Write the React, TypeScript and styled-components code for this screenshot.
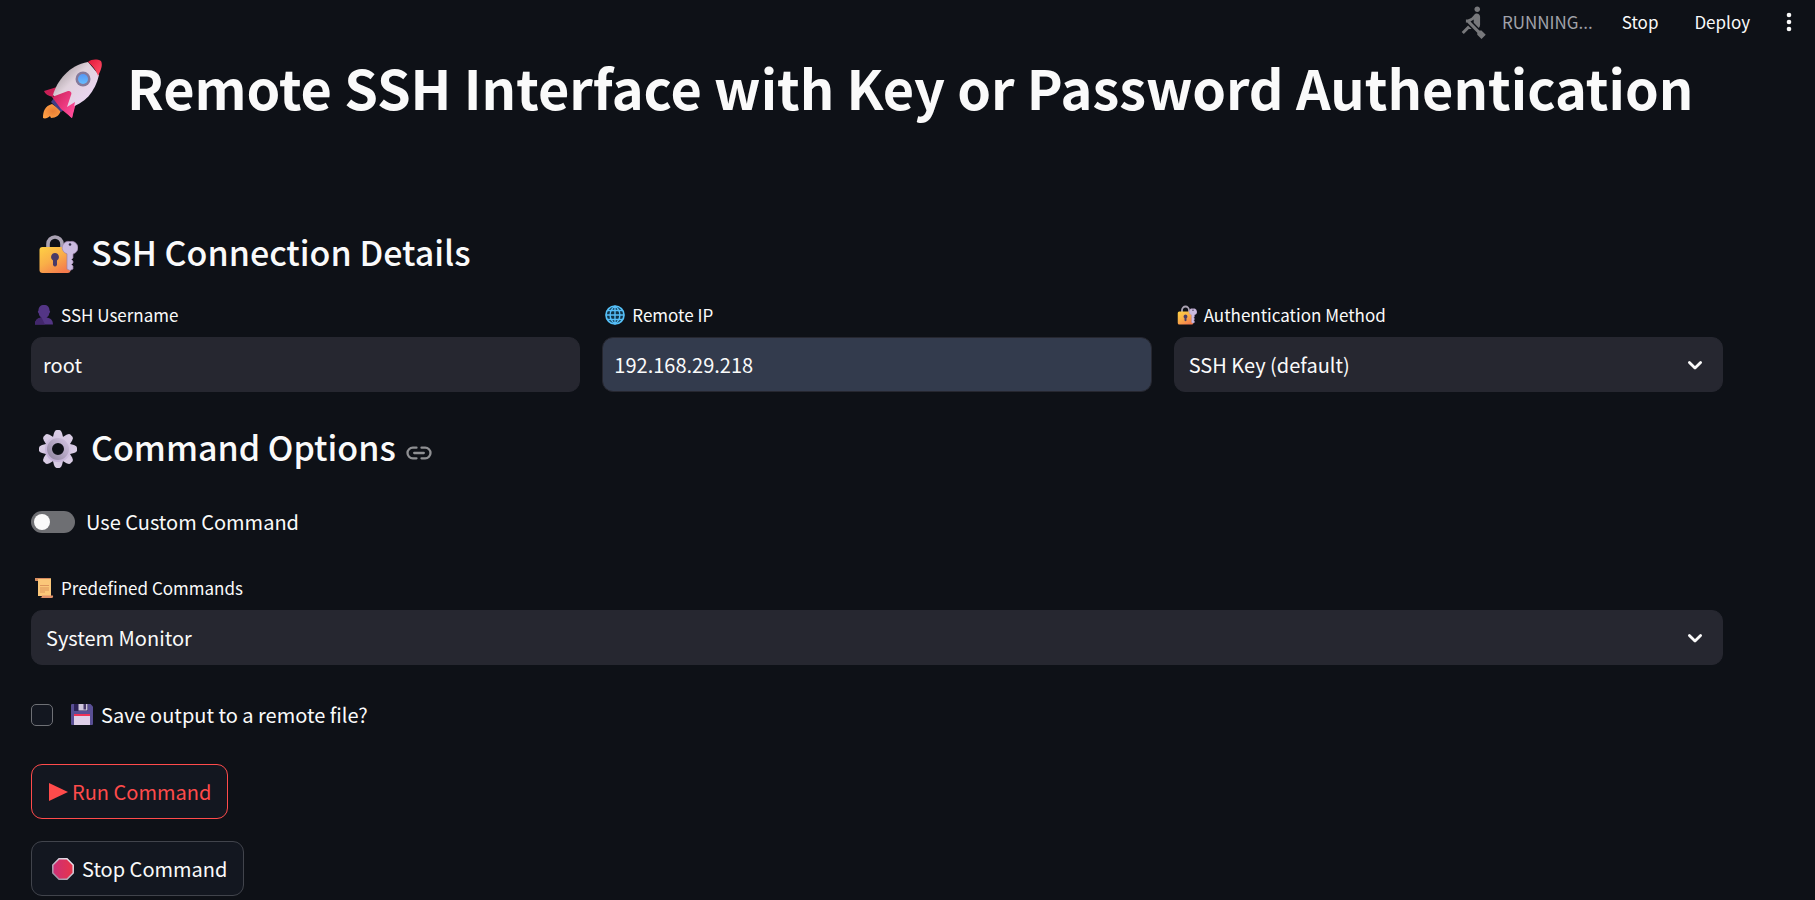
import React, { useState } from "react";
import styled, { createGlobalStyle, css } from "styled-components";

const GlobalStyle = createGlobalStyle`
  *, *::before, *::after { box-sizing: border-box; }
  body {
    margin: 0;
    background: #0e1117;
    color: #fafafa;
    font-family: "Noto Sans CJK SC", "Noto Sans", sans-serif;
    font-size: 20px;
    line-height: 32px;
  }
  button, input, select { font: inherit; color: inherit; }
`;

const Header = styled.header`
  display: flex;
  align-items: center;
  justify-content: flex-end;
  height: 44px;
  padding-right: 10px;
  font-size: 17px;
  line-height: 24px;
`;

const Status = styled.div`
  display: flex;
  align-items: center;
  gap: 12px;
  margin-right: 11px;
  color: #a0a2aa;
`;

const HeaderButton = styled.button`
  border: 0;
  background: none;
  padding: 0 18px;
  cursor: pointer;
`;

const MenuButton = styled(HeaderButton)`
  display: flex;
  padding: 0 5px;
  margin-left: 5px;
`;

const Main = styled.main`
  padding: 7px 92px 4px 31px;
`;

const Title = styled.h1`
  display: flex;
  align-items: center;
  gap: 24px;
  margin: 0 0 101px;
  padding-left: 11px;
  font-size: 54px;
  font-weight: 700;
  line-height: 72px;
  white-space: nowrap;
  & > svg { margin-top: 4px; }
`;

const Heading = styled.h2`
  display: flex;
  align-items: center;
  gap: 13px;
  margin: 0;
  padding-left: 7px;
  font-size: 34px;
  font-weight: 500;
  line-height: 56px;
  & > svg { margin-top: 4px; }
`;

const HeadingLink = styled.a`
  display: flex;
  margin: 11px 0 0 -3px;
`;

const Columns = styled.div`
  display: grid;
  grid-template-columns: repeat(3, minmax(0, 1fr));
  gap: 22px;
  margin: 22px 0 27px;
`;

const Field = styled.div`
  display: flex;
  flex-direction: column;
  gap: 9px;
`;

const Label = styled.label`
  display: flex;
  align-items: center;
  gap: 7px;
  padding-left: 3px;
  font-size: 17px;
  line-height: 26px;
`;

const control = css`
  width: 100%;
  height: 55px;
  border: 1px solid #262730;
  border-radius: 11px;
  background: #262730;
  outline: none;
`;

const TextInput = styled.input<{ $filled?: boolean }>`
  ${control}
  padding: 0 11px;
  ${(p) => p.$filled && "background: #333b4d;"}
`;

const SelectWrap = styled.div`
  display: grid;
  align-items: center;
  & > * { grid-area: 1 / 1; }
  & > svg { justify-self: end; margin-right: 17px; pointer-events: none; }
`;

const SelectBox = styled.select`
  ${control}
  appearance: none;
  padding: 0 44px 0 14px;
`;

const Switch = styled.input`
  appearance: none;
  display: flex;
  align-items: center;
  width: 44px;
  height: 22px;
  margin: 0;
  padding: 0 3px;
  border-radius: 11px;
  background: #6e6f73;
  &::before {
    content: "";
    width: 16px;
    height: 16px;
    border-radius: 50%;
    background: #fafafa;
  }
  &:checked { justify-content: flex-end; background: #ff4b4b; }
`;

const Tick = styled.input`
  appearance: none;
  width: 22px;
  height: 22px;
  margin: 0 10px 0 0;
  border: 1px solid #6e7075;
  border-radius: 5px;
  background: #131720;
  &:checked { background: #ff4b4b; border-color: #ff4b4b; }
`;

const Option = styled.label<{ $gap: number }>`
  display: flex;
  align-items: center;
  width: fit-content;
  gap: ${(p) => p.$gap}px;
`;

const Block = styled.div<{ $top: number; $bottom: number }>`
  margin: ${(p) => p.$top}px 0 ${(p) => p.$bottom}px;
`;

const Actions = styled.div`
  display: flex;
  flex-direction: column;
  align-items: flex-start;
  gap: 22px;
`;

const ActionButton = styled.button<{ $primary?: boolean }>`
  display: flex;
  align-items: center;
  gap: ${(p) => (p.$primary ? 4 : 8)}px;
  height: 55px;
  padding: 0 16px;
  border: 1px solid ${(p) => (p.$primary ? "#ff4b4b" : "#41444c")};
  border-radius: 11px;
  background: #131720;
  color: ${(p) => (p.$primary ? "#ff4b4b" : "#fafafa")};
  cursor: pointer;
`;

const Rowing = () => (
  <svg width="34" height="34" viewBox="0 0 24 24" fill="#77787b" aria-hidden="true">
    <path d="M8.5 14.5 4 19l1.5 1.5L9 17h2l-2.5-2.5zM15 1c-1.1 0-2 .9-2 2s.9 2 2 2 2-.9 2-2-.9-2-2-2zm6 20.01L18 24l-2.99-3.01V19.5l-7.1-7.09c-.31.05-.61.07-.91.07v-2.16c1.66.03 3.61-.87 4.67-2.04l1.4-1.55c.19-.21.43-.38.69-.5.29-.14.62-.23.96-.23h.03C15.99 6.01 17 7.02 17 8.26v5.75c0 .84-.35 1.61-.92 2.16l-3.58-3.58v-2.27c-.63.52-1.43 1.02-2.29 1.39L16.5 18H18l3 3.01z" />
  </svg>
);

const Dots = () => (
  <svg width="22" height="22" viewBox="0 0 22 22" fill="#fafafa" aria-hidden="true">
    <circle cx="11" cy="4" r="2.3" />
    <circle cx="11" cy="11" r="2.3" />
    <circle cx="11" cy="18" r="2.3" />
  </svg>
);

const Chevron = () => (
  <svg width="22" height="22" viewBox="0 0 22 22" fill="none" stroke="#fafafa" strokeWidth="2.8" strokeLinecap="round" strokeLinejoin="round" aria-hidden="true">
    <path d="M5.4 8.4 11 14l5.600-5.600" />
  </svg>
);

const LinkIcon = () => (
  <svg width="26" height="14" viewBox="0 0 26 14" fill="none" stroke="#8f9093" strokeWidth="2.300" strokeLinecap="round" aria-hidden="true">
    <path d="M10.500 1.700H6.800a5.300 5.300 0 0 0 0 10.600h3.700M15.500 1.700h3.700a5.300 5.300 0 0 1 0 10.600h-3.700M8.200 7h9.600" />
  </svg>
);

const Rocket = () => (
  <svg width="61" height="61" viewBox="0 0 61 61" aria-hidden="true">
    <defs>
      <linearGradient id="rk-body" x1="18" y1="18" x2="42" y2="42" gradientUnits="userSpaceOnUse">
        <stop offset="0" stopColor="#b9aeb4" />
        <stop offset=".35" stopColor="#e0d2dc" />
        <stop offset="1" stopColor="#ead5f0" />
      </linearGradient>
      <linearGradient id="rk-nose" x1="46" y1="4" x2="58" y2="14" gradientUnits="userSpaceOnUse">
        <stop offset="0" stopColor="#e51e3e" />
        <stop offset="1" stopColor="#ff4a63" />
      </linearGradient>
      <linearGradient id="rk-fin" x1="8" y1="34" x2="32" y2="52" gradientUnits="userSpaceOnUse">
        <stop offset="0" stopColor="#c91f55" />
        <stop offset="1" stopColor="#ff4a98" />
      </linearGradient>
      <radialGradient id="rk-fire" cx=".55" cy=".5" r=".6">
        <stop offset="0" stopColor="#e87f35" />
        <stop offset="1" stopColor="#ffa045" />
      </radialGradient>
      <linearGradient id="rk-window" x1="0" y1="0" x2="0" y2="1">
        <stop offset="0" stopColor="#5797f4" />
        <stop offset="1" stopColor="#65bcff" />
      </linearGradient>
    </defs>
    <path d="M10 45c-7 2-9 7-9 14 2 1 5 0 7-2l1 2c5 0 9-3 10-8z" fill="url(#rk-fire)" />
    <path d="m9 43 10 10 4-3L12 39z" fill="#403d85" />
    <path d="M15 28 2 32c1 3 4 5 9 6z" fill="url(#rk-fin)" />
    <path d="m34 44-10 8c2 3 4 6 6 7z" fill="url(#rk-fin)" />
    <path d="M11 36C15 22 27 6 46 3l11 13c-4 17-14 29-31 33z" fill="url(#rk-body)" />
    <path d="M46 3c4-3 9-3 13-1 2 4 0 9-3 15-1-5-6-11-10-14z" fill="url(#rk-nose)" />
    <path d="m10 38 16-6c3 0 4 2 3 4l-4 12 8-5-3 16-11-9z" fill="url(#rk-fin)" />
    <circle cx="41" cy="20" r="7.500" fill="#85799a" />
    <circle cx="41" cy="20" r="5" fill="url(#rk-window)" />
  </svg>
);

const LockKey = ({ size, id }: { size: number; id: string }) => (
  <svg width={size} height={size} viewBox="0 0 40 40" aria-hidden="true">
    <defs>
      <linearGradient id={id} x1="0" y1="0" x2=".7" y2="1">
        <stop offset="0" stopColor="#ffd044" />
        <stop offset=".5" stopColor="#f9b048" />
        <stop offset="1" stopColor="#f57b4c" />
      </linearGradient>
    </defs>
    <path d="M10 15V10a7 7 0 0 1 14 0v5" fill="none" stroke="#aaa2b3" strokeWidth="3.600" />
    <rect x="1.500" y="13" width="31" height="26" rx="3" fill={`url(#${id})`} />
    <path d="M32 7.500a6.300 6.300 0 0 0-3 12.300V35l3 1.500 3-1.500v-3l-1.500-1.500L35 29v-2l-1.500-1.500L35 24v-4a6.300 6.300 0 0 0-3-12.500z" fill="#cbbbe0" stroke="#9c83a8" strokeWidth=".7" />
    <circle cx="32" cy="10.500" r="1.300" fill="#332f45" />
    <path d="M17 19a4 4 0 0 0-2 7.400V31q2 3 4 0v-4.600A4 4 0 0 0 17 19z" fill="#493b67" />
  </svg>
);

const Person = () => (
  <svg width="20" height="20" viewBox="0 0 20 20" aria-hidden="true">
    <path d="M10 0c3.600 0 5.500 2 5.500 5.500 1 1 .8 2-.2 2.700C15 10.500 14 11.500 12.500 12.500c4 .5 6.500 2.500 6.500 7H1c0-4.500 2.500-6.500 6.500-7C6 11.500 5 10.500 4.700 8.200c-1-.7-1.200-1.700-.2-2.700C4.500 2 6.400 0 10 0z" fill="#533585" />
    <path d="M1 19.500c0-4.500 2.500-6.500 6.500-7L11 19.500z" fill="#42276c" />
  </svg>
);

const Globe = () => (
  <svg width="20" height="20" viewBox="0 0 20 20" fill="none" aria-hidden="true">
    <circle cx="10" cy="10" r="9" fill="#103247" stroke="#55c1f8" strokeWidth="1.700" />
    <path d="M10 1v18M1 10h18M3 5.500h14M3 14.500h14M10 1C3.500 6 3.500 14 10 19M10 1c6.500 5 6.500 13 0 18" stroke="#55bdf8" strokeWidth="1.400" />
  </svg>
);

const Gear = () => (
  <svg width="40" height="40" viewBox="0 0 40 40" aria-hidden="true">
    <defs>
      <linearGradient id="gear" x1="32" y1="4" x2="8" y2="36" gradientUnits="userSpaceOnUse">
        <stop offset="0" stopColor="#ded3e8" />
        <stop offset="1" stopColor="#bba6d1" />
      </linearGradient>
      <linearGradient id="gear-ring" x1="1" y1="0" x2="0" y2="1">
        <stop offset="0" stopColor="#cdbedc" />
        <stop offset="1" stopColor="#958aa4" />
      </linearGradient>
    </defs>
    <g fill="url(#gear)">
      {[0, 45, 90, 135, 180, 225, 270, 315].map((angle) => (
        <path key={angle} transform={`rotate(${angle} 20 20)`} d="m14.500 10 1.500-6Q17 1 18.500 1h3Q23 1 24 4l1.500 6z" />
      ))}
      <path fillRule="evenodd" d="M20 7a13 13 0 1 0 0 26 13 13 0 0 0 0-26zm0 7a6 6 0 1 1 0 12 6 6 0 0 1 0-12z" />
    </g>
    <circle cx="20" cy="20" r="8.500" fill="#0e1117" stroke="url(#gear-ring)" strokeWidth="5" />
  </svg>
);

const Scroll = () => (
  <svg width="20" height="20" viewBox="0 0 20 20" aria-hidden="true">
    <path d="M1 1q0-1 1-1h14q1 0 1 1v17H4V3H2Q1 3 1 1z" fill="#fbc779" />
    <path d="M1 1q0-1 1-1h14v1H4v2H2Q1 3 1 1z" fill="#d78b60" />
    <path d="M8 17.500h11q.5 2.500-1.500 2.500H6q2 0 2-2.500z" fill="#e0916a" />
    <path d="M6 7.500h9M6 10h9M6 12h9M6 14h5" stroke="#dd965c" strokeWidth="1.200" />
  </svg>
);

const Floppy = () => (
  <svg width="22" height="22" viewBox="0 0 22 22" aria-hidden="true">
    <path d="M0 1q0-1 1-1h18.500L22 2.500V20q0 1-1 1H1q-1 0-1-1z" fill="#594f94" />
    <path d="M3 0h14v7H3z" fill="#2c2257" />
    <path d="M7.500 0h9v6.500h-9z" fill="#cfc6dc" />
    <path d="M12.500 0h2.500v5.500h-2.500z" fill="#463968" />
    <path d="M3 10h16v11H3z" fill="#decfe8" />
    <path d="M3 10h16v2H3z" fill="#ef3257" />
  </svg>
);

const Play = () => (
  <svg width="20" height="18" viewBox="0 0 20 18" fill="#ff4b4b" aria-hidden="true">
    <path d="M1 0v18L20 9z" />
  </svg>
);

const StopSign = () => (
  <svg width="22" height="22" viewBox="0 0 22 22" aria-hidden="true">
    <defs>
      <linearGradient id="stop-fill">
        <stop offset="0" stopColor="#cb2f78" />
        <stop offset="1" stopColor="#e8344a" />
      </linearGradient>
      <linearGradient id="stop-rim" x1="0" y1="1" x2="1" y2="0">
        <stop offset="0" stopColor="#93879a" />
        <stop offset="1" stopColor="#f6eff7" />
      </linearGradient>
    </defs>
    <path d="M7 .8h8L21.200 7v8L15 21.200H7L.8 15V7z" fill="url(#stop-fill)" stroke="url(#stop-rim)" strokeWidth="1.500" />
  </svg>
);

const StopIconSlot = styled.span`
  display: flex;
  margin-left: 4px;
`;

export default function App() {
  const [user, setUser] = useState("root");
  const [ip, setIp] = useState("192.168.29.218");

  return (
    <>
      <GlobalStyle />
      <Header>
        <Status role="status">
          <Rowing />
          RUNNING...
        </Status>
        <HeaderButton type="button">Stop</HeaderButton>
        <HeaderButton type="button">Deploy</HeaderButton>
        <MenuButton type="button" aria-label="Main menu">
          <Dots />
        </MenuButton>
      </Header>
      <Main>
        <Title>
          <Rocket />
          Remote SSH Interface with Key or Password Authentication
        </Title>

        <Heading>
          <LockKey size={40} id="lock-heading" />
          SSH Connection Details
        </Heading>
        <Columns>
          <Field>
            <Label htmlFor="user"><Person />SSH Username</Label>
            <TextInput id="user" value={user} onChange={(e) => setUser(e.target.value)} />
          </Field>
          <Field>
            <Label htmlFor="ip"><Globe />Remote IP</Label>
            <TextInput id="ip" $filled value={ip} onChange={(e) => setIp(e.target.value)} />
          </Field>
          <Field>
            <Label htmlFor="auth"><LockKey size={20} id="lock-label" />Authentication Method</Label>
            <SelectWrap>
              <SelectBox id="auth">
                <option>SSH Key (default)</option>
              </SelectBox>
              <Chevron />
            </SelectWrap>
          </Field>
        </Columns>

        <Heading id="command-options">
          <Gear />
          Command Options
          <HeadingLink href="#command-options" aria-label="Link to Command Options">
            <LinkIcon />
          </HeadingLink>
        </Heading>
        <Block $top={31} $bottom={37}>
          <Option $gap={11}>
            <Switch type="checkbox" role="switch" />
            Use Custom Command
          </Option>
        </Block>
        <Field>
          <Label htmlFor="predefined"><Scroll />Predefined Commands</Label>
          <SelectWrap>
            <SelectBox id="predefined">
              <option>System Monitor</option>
            </SelectBox>
            <Chevron />
          </SelectWrap>
        </Field>
        <Block $top={34} $bottom={33}>
          <Option $gap={8}>
            <Tick type="checkbox" />
            <Floppy />
            Save output to a remote file?
          </Option>
        </Block>
        <Actions>
          <ActionButton type="button" $primary>
            <Play />
            Run Command
          </ActionButton>
          <ActionButton type="button">
            <StopIconSlot>
              <StopSign />
            </StopIconSlot>
            Stop Command
          </ActionButton>
        </Actions>
      </Main>
    </>
  );
}
